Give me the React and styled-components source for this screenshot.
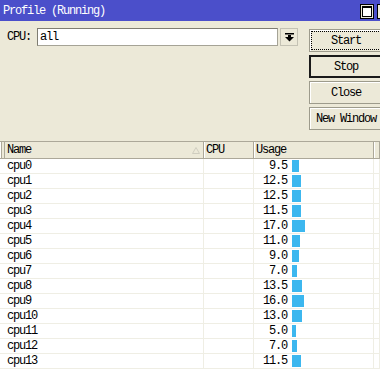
import styled, { createGlobalStyle } from "styled-components";

const GlobalStyle = createGlobalStyle`
    html, body {
        margin: 0;
        padding: 0;
        background: #ece9d8;
    }
    body {
        font-family: "Liberation Mono", "DejaVu Sans Mono", monospace;
        font-size: 12px;
        letter-spacing: -1.2px;
        color: #000;
    }
`

const Window = styled.div`
    width: 380px;
    height: 369px;
    overflow: hidden;
    display: flex;
    flex-direction: column;
    background: #ece9d8;
`

const TitleBar = styled.div`
    height: 21px;
    flex-shrink: 0;
    background: #4b4fca;
    color: #fff;
    display: flex;
    align-items: center;
    justify-content: space-between;
    padding-left: 3px;
`

const TitleIcons = styled.div`
    display: flex;
    gap: 3px;
    margin-right: -11px;
    align-self: flex-start;
    margin-top: 4px;
`

const Controls = styled.div`
    display: flex;
    padding-top: 7px;
    flex-shrink: 0;
`

const Selector = styled.div`
    display: flex;
    align-items: flex-start;
    padding-left: 7px;
`

const Label = styled.span`
    width: 30px;
    line-height: 18px;
`

const Field = styled.div`
    width: 237px;
    height: 16px;
    background: #fff;
    border: 1px solid #a5a396;
    border-top-color: #7f7d72;
    border-left-color: #7f7d72;
    padding: 0 0 0 2px;
    line-height: 16px;
`

const DropButton = styled.div`
    width: 16px;
    height: 16px;
    margin-left: 2px;
    border: 1px solid #c4c2b4;
    display: flex;
    align-items: center;
    justify-content: center;
`

const ButtonColumn = styled.div`
    display: flex;
    flex-direction: column;
    gap: 3px;
    margin-left: 11px;
    margin-top: 1px;
    width: 80px;
    flex-shrink: 0;
`

const Button = styled.div`
    height: 23px;
    box-sizing: border-box;
    display: flex;
    align-items: center;
    justify-content: center;
    padding-right: 6px;
    border: ${p => p.$primary ? "2px solid #1a1a1a" : "1px solid #9d9b8c"};
    box-shadow: ${p => p.$primary ? "none" : "inset 1px 1px 0 #fff"};
    outline: ${p => p.$focus ? "1px dotted #000" : "none"};
    outline-offset: -3px;
`

const Table = styled.div`
    margin-top: 11px;
    display: grid;
    grid-template-columns: 204px 50px 120px 1fr;
`

const HeadCell = styled.div`
    height: 16px;
    line-height: 16px;
    border-top: 1px solid #aca899;
    border-bottom: 1px solid #aca899;
    border-right: 1px solid #aca899;
    box-shadow: inset 1px 0 0 #fff;
    padding-left: ${p => p.$first ? "7px" : "2px"};
    position: relative;
    background: #ece9d8;
`

const EdgeLines = styled.span`
    position: absolute;
    left: 1px;
    top: 0;
    bottom: 0;
    width: 2px;
    border-left: 1px solid #aca899;
    border-right: 1px solid #aca899;
`

const SortMark = styled.svg`
    position: absolute;
    right: 3px;
    top: 5px;
`

const Cell = styled.div`
    height: 14px;
    line-height: 14px;
    background: #fff;
    border-bottom: 1px solid #efeee4;
    border-right: 1px solid #efeee4;
    padding-left: ${p => p.$first ? "7px" : "0"};
    display: ${p => p.$usage ? "flex" : "block"};
    align-items: center;
`

const Value = styled.span`
    width: 33px;
    text-align: right;
`

const Bar = styled.span`
    height: 12px;
    margin-left: 5px;
    background: #3cb7ef;
`

const rows = [9.5, 12.5, 12.5, 11.5, 17.0, 11.0, 9.0, 7.0, 13.5, 16.0, 13.0, 5.0, 7.0, 11.5]

export default function App() {
    return <Window>
        <GlobalStyle />
        <TitleBar>
            <span>Profile (Running)</span>
            <TitleIcons>
                <svg width="14" height="15" viewBox="0 0 14 15">
                    <rect x="0.5" y="0.5" width="13" height="14" fill="#ece9d8" stroke="#000" />
                    <rect x="2.5" y="2.5" width="9" height="10" fill="#fff" stroke="#000" />
                    <rect x="2" y="2" width="10" height="2" fill="#000" />
                </svg>
                <svg width="14" height="15" viewBox="0 0 14 15">
                    <rect x="0.5" y="0.5" width="13" height="14" fill="#ece9d8" stroke="#000" />
                </svg>
            </TitleIcons>
        </TitleBar>

        <Controls>
            <Selector>
                <Label>CPU:</Label>
                <Field>all</Field>
                <DropButton>
                    <svg width="9" height="9" viewBox="0 0 9 9">
                        <rect x="0" y="0" width="9" height="1.5" fill="#000" />
                        <rect x="3" y="2" width="3" height="2" fill="#000" />
                        <polygon points="0,4 9,4 4.5,8.5" fill="#000" />
                    </svg>
                </DropButton>
            </Selector>
            <ButtonColumn>
                <Button $focus>Start</Button>
                <Button $primary>Stop</Button>
                <Button>Close</Button>
                <Button>New Window</Button>
            </ButtonColumn>
        </Controls>

        <Table>
            <HeadCell $first>
                <EdgeLines />
                Name
                <SortMark width="8" height="7" viewBox="0 0 8 7">
                    <polygon points="4,0.5 7.5,6.5 0.5,6.5" fill="none" stroke="#cfcdbf" />
                </SortMark>
            </HeadCell>
            <HeadCell>CPU</HeadCell>
            <HeadCell>Usage</HeadCell>
            <HeadCell />
            {rows.map((v, i) => [
                <Cell key={"n" + i} $first>cpu{i}</Cell>,
                <Cell key={"c" + i} />,
                <Cell key={"u" + i} $usage>
                    <Value>{v.toFixed(1)}</Value>
                    <Bar style={{ width: Math.round(v * 0.75) + "px" }} />
                </Cell>,
                <Cell key={"f" + i} />
            ])}
        </Table>
    </Window>
}
